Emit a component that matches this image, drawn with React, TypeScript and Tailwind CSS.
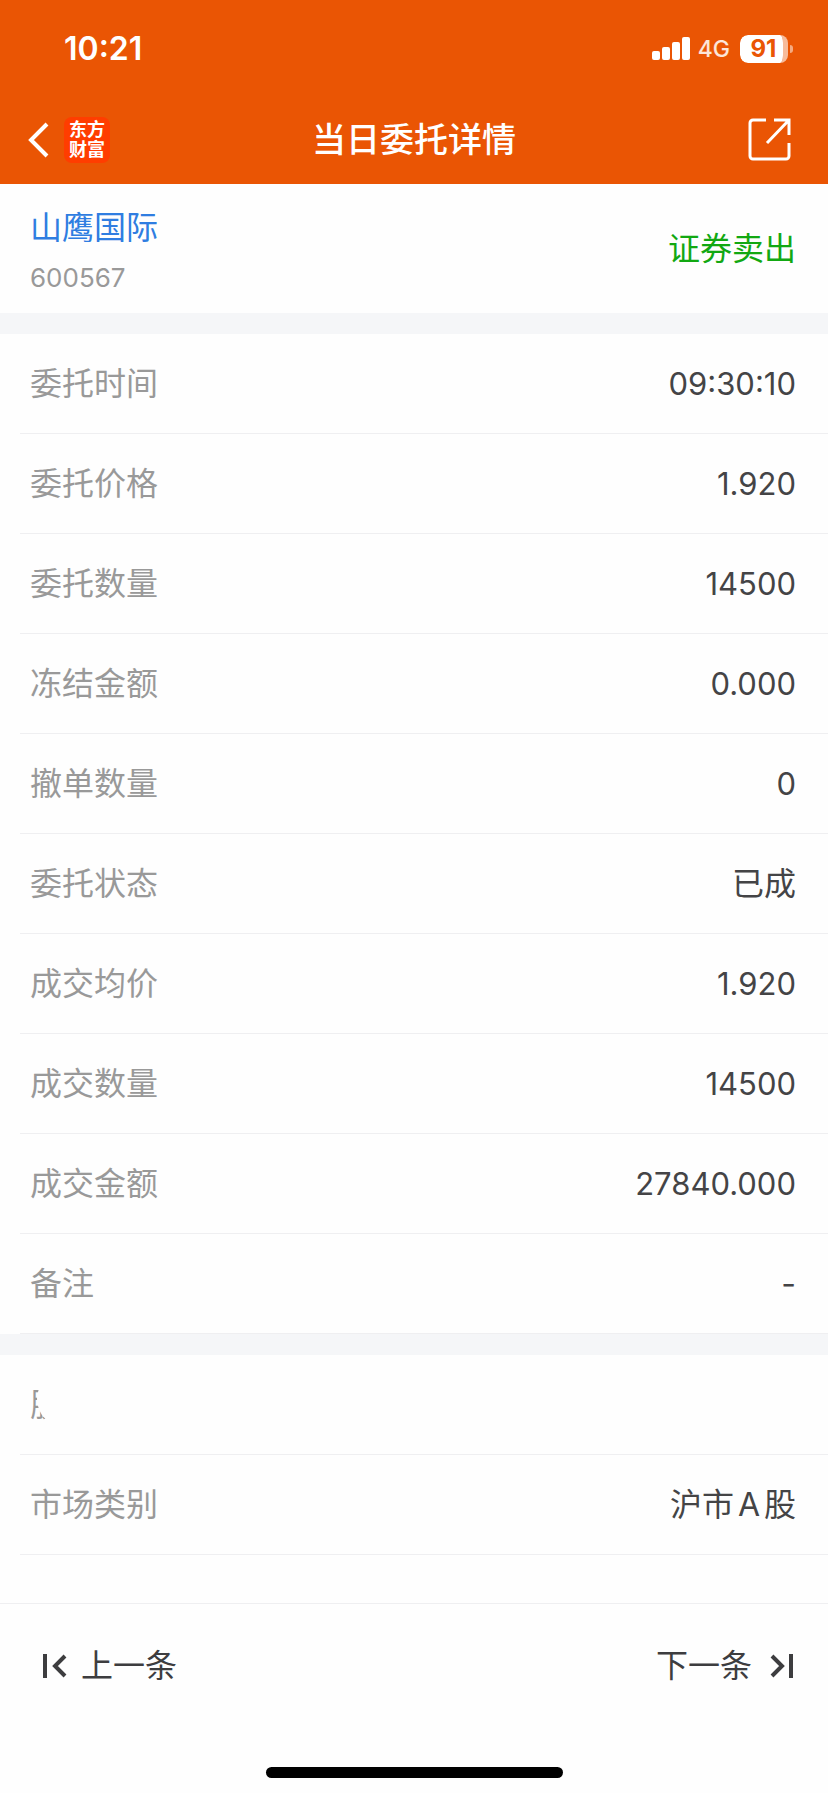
import type { ReactNode } from "react";

type Row = {
  label: string;
  value: string;
};

const orderRows: Row[] = [
  { label: "委托时间", value: "09:30:10" },
  { label: "委托价格", value: "1.920" },
  { label: "委托数量", value: "14500" },
  { label: "冻结金额", value: "0.000" },
  { label: "撤单数量", value: "0" },
  { label: "委托状态", value: "已成" },
  { label: "成交均价", value: "1.920" },
  { label: "成交数量", value: "14500" },
  { label: "成交金额", value: "27840.000" },
  { label: "备注", value: "-" },
];

function SignalIcon() {
  return (
    <svg width="38" height="24" viewBox="0 0 38 24" fill="currentColor" aria-hidden="true">
      <rect x="0" y="14" width="8" height="9" rx="2" />
      <rect x="10" y="10" width="8" height="13" rx="2" />
      <rect x="20" y="5" width="8" height="18" rx="2" />
      <rect x="30" y="0" width="8" height="23" rx="2" />
    </svg>
  );
}

function BackIcon() {
  return (
    <svg width="22" height="38" viewBox="0 0 22 38" fill="none" stroke="currentColor" strokeWidth="4" aria-hidden="true">
      <path d="M19 3 3 19l16 16" />
    </svg>
  );
}

function ShareIcon() {
  return (
    <svg width="44" height="44" viewBox="0 0 44 44" fill="none" stroke="currentColor" strokeWidth="3" aria-hidden="true">
      <path d="M18 2H5a3 3 0 0 0-3 3v33a3 3 0 0 0 3 3h33a3 3 0 0 0 3-3V25" />
      <path d="M26 2h15v15M41 2 19 25" />
    </svg>
  );
}

function PrevIcon() {
  return (
    <svg width="24" height="24" viewBox="0 0 24 24" fill="none" stroke="currentColor" strokeWidth="4" aria-hidden="true">
      <path d="M2 0v24M22 2 12 12l10 10" />
    </svg>
  );
}

function NextIcon() {
  return (
    <svg width="24" height="24" viewBox="0 0 24 24" fill="none" stroke="currentColor" strokeWidth="4" aria-hidden="true">
      <path d="M21 0v24M2 2l10 10L2 22" />
    </svg>
  );
}

function DetailRow({ label, children }: { label: string; children?: ReactNode }) {
  return (
    <div className="ml-5 flex h-[100px] items-center justify-between border-b border-[#efeff1] pr-8 pl-[10px]">
      <dt className="text-[#999999]">{label}</dt>
      <dd className="text-[#444446]">{children}</dd>
    </div>
  );
}

export default function App() {
  return (
    <div className="flex min-h-screen flex-col bg-[#fefefe] font-['Inter','Noto_Sans_CJK_SC',sans-serif] text-[32px] leading-10">
      {/* ---------- HEADER ---------- */}
      <header className="bg-[#ea5504] text-white">
        <div className="flex h-[98px] items-center justify-between pr-[35px] pl-16">
          <span className="font-semibold">10:21</span>
          <div className="flex items-center">
            <SignalIcon />
            <span className="ml-2 text-[23px] font-medium text-white/85">4G</span>
            <div className="ml-[10px] flex items-center gap-[2px]">
              <span className="flex h-7 w-12 items-center justify-center rounded-[8px] border-r-[5px] border-white/60 bg-white bg-clip-padding pl-1 text-[24px] font-bold text-[#ea5504]">
                91
              </span>
              <span className="h-2 w-[3px] rounded-r-full bg-white/50" />
            </div>
          </div>
        </div>

        <div className="grid h-[86px] grid-cols-[1fr_auto_1fr] items-center px-7 pb-[2px]">
          <div className="flex items-center gap-[14px]">
            <button type="button" aria-label="返回">
              <BackIcon />
            </button>
            <span className="flex h-[46px] w-[46px] flex-col items-center justify-center rounded-[8px] bg-[#ff3d00] text-[18px] leading-5 font-bold">
              <span>东方</span>
              <span>财富</span>
            </span>
          </div>
          <h1 className="text-[34px] font-medium">当日委托详情</h1>
          <button type="button" aria-label="分享" className="mr-2 justify-self-end">
            <ShareIcon />
          </button>
        </div>
      </header>

      {/* ---------- STOCK ---------- */}
      <section className="flex h-[129px] items-center justify-between pr-8 pl-[30px]">
        <div className="flex flex-col gap-[14px] pt-1">
          <a href="#" className="text-[#2f7de1]">山鹰国际</a>
          <span className="text-[26px] leading-8 text-[#999999]">600567</span>
        </div>
        <span className="text-[#12a812]">证券卖出</span>
      </section>

      {/* ---------- ORDER DETAILS ---------- */}
      <dl className="border-t-[21px] border-[#f5f6f8]">
        {orderRows.map(({ label, value }) => (
          <DetailRow key={label} label={label}>
            {/^[\d.:]+$/.test(value) ? <span className="text-[31px]">{value}</span> : value}
          </DetailRow>
        ))}
      </dl>

      {/* ---------- ACCOUNT ---------- */}
      <dl className="border-t-[21px] border-[#f5f6f8]">
        <div className="relative">
          <DetailRow label="股" />
          {/* hides the account number */}
          <span className="absolute top-4 right-7 left-[37px] h-14 rounded-full bg-[#fefefe]" />
        </div>
        <DetailRow label="市场类别">
          沪市<span className="mx-1">A</span>股
        </DetailRow>
      </dl>

      {/* ---------- FOOTER ---------- */}
      <footer className="mt-12 flex grow flex-col justify-between border-t border-[#efeff1] pb-[15px] text-[#3d3d3f]">
        <nav className="flex h-[124px] items-center justify-between pr-[34px] pl-[43px]">
          <button type="button" className="flex items-center gap-[14px]">
            <PrevIcon />
            上一条
          </button>
          <button type="button" className="flex items-center gap-[18px]">
            下一条
            <NextIcon />
          </button>
        </nav>
        <div className="mx-auto h-[11px] w-[297px] rounded-full bg-black" />
      </footer>
    </div>
  );
}
